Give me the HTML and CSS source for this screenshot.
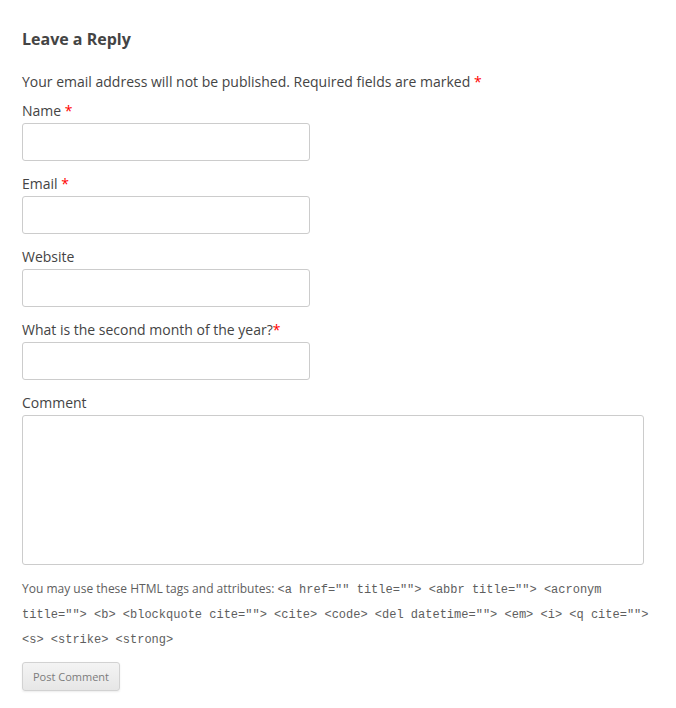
FILE: index.html
```html
<!DOCTYPE html>
<html lang="en">
<head>
<meta charset="utf-8">
<title>Leave a Reply</title>
<link rel="stylesheet" href="styles.css">
</head>
<body>
<main class="respond">
  <h3 class="title">Leave a Reply</h3>
  <form class="form">
    <p class="notes">Your email address will not be published. Required fields are marked <span class="required">*</span></p>
    <div class="field">
      <label for="author">Name <span class="required">*</span></label>
      <input id="author" type="text">
    </div>
    <div class="field">
      <label for="email">Email <span class="required">*</span></label>
      <input id="email" type="text">
    </div>
    <div class="field">
      <label for="url">Website</label>
      <input id="url" type="text">
    </div>
    <div class="field">
      <label for="quiz">What is the second month of the year?<span class="required">*</span></label>
      <input id="quiz" type="text">
    </div>
    <div class="field">
      <label for="comment">Comment</label>
      <textarea id="comment"></textarea>
    </div>
    <p class="allowed">You may use these HTML tags and attributes: <code>&lt;a href="" title=""&gt; &lt;abbr title=""&gt; &lt;acronym title=""&gt; &lt;b&gt; &lt;blockquote cite=""&gt; &lt;cite&gt; &lt;code&gt; &lt;del datetime=""&gt; &lt;em&gt; &lt;i&gt; &lt;q cite=""&gt; &lt;s&gt; &lt;strike&gt; &lt;strong&gt;</code></p>
    <button class="submit" type="button">Post Comment</button>
  </form>
</main>
</body>
</html>
```

FILE: styles.css
```css
* {
  box-sizing: border-box;
}

body {
  margin: 0;
  background: #fff;
  color: #444;
  font: 14px/24px "Open Sans", sans-serif;
}

.respond {
  padding: 27px 24px 16px 22px;
}

.title {
  margin: 0 0 19px;
  font-size: 16px;
  line-height: 24px;
  font-weight: 700;
}

.notes {
  margin: 0 0 5px;
}

.required {
  color: #f00;
}

.field {
  display: flex;
  flex-direction: column;
  align-items: flex-start;
  margin: 0 8px 11px 0;
}

input,
textarea {
  border: 1px solid #ccc;
  border-radius: 3px;
  background: #fff;
  color: inherit;
  font: inherit;
  padding: 6px 10px;
}

input {
  width: 288px;
  max-width: 100%;
  height: 38px;
}

textarea {
  width: 100%;
  height: 150px;
  resize: none;
}

.allowed {
  margin: 0 0 11px;
  color: #5e5e5e;
  font-size: 12px;
  line-height: 25px;
}

code {
  font: 12px/12px "Liberation Mono", monospace;
}

.submit {
  display: block;
  padding: 5px 10px;
  border: 1px solid #d2d2d2;
  border-radius: 3px;
  background: linear-gradient(#f4f4f4, #e6e6e6);
  box-shadow: 0 1px 2px rgba(64, 64, 64, 0.1);
  color: #7c7c7c;
  font: 11px/17px "Open Sans", sans-serif;
}
```
